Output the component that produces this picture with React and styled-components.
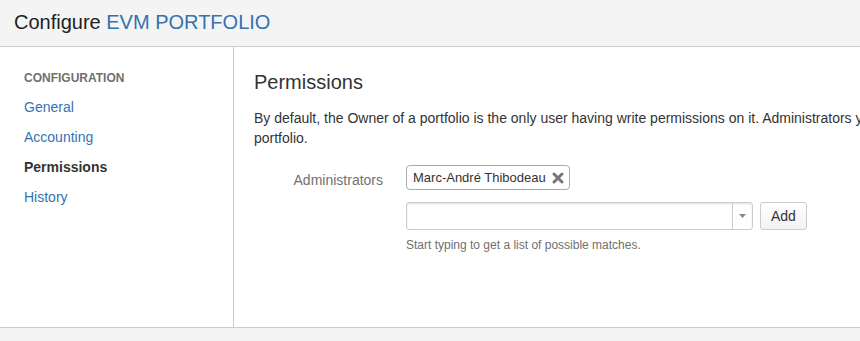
import React from "react";
import styled, { createGlobalStyle } from "styled-components";

const GlobalStyle = createGlobalStyle`
  html, body {
    margin: 0;
    padding: 0;
    background: #fff;
    font-family: "Liberation Sans", Arial, sans-serif;
    color: #333;
  }
`;

const Page = styled.div`
  width: 860px;
  height: 341px;
  display: flex;
  flex-direction: column;
  overflow: hidden;
`;

const Header = styled.div`
  height: 47px;
  background: #f4f4f4;
  border-bottom: 1px solid #cccccc;
  display: flex;
  align-items: center;
  padding-left: 14px;
  box-sizing: border-box;
`;

const Title = styled.h1`
  margin: 0;
  font-size: 20px;
  font-weight: 400;
  color: #222;
  margin-top: -2px;

  span {
    color: #3572b0;
  }
`;

const Body = styled.div`
  display: flex;
  height: 280px;
  border-bottom: 1px solid #cccccc;
`;

const Sidebar = styled.nav`
  width: 234px;
  border-right: 1px solid #cccccc;
  padding: 23px 0 0 24px;
  box-sizing: border-box;
`;

const NavHeading = styled.div`
  font-size: 12px;
  font-weight: 700;
  color: #707070;
  height: 16px;
  line-height: 16px;
  margin-bottom: 6px;
`;

const NavItem = styled.a`
  display: block;
  font-size: 14px;
  height: 30px;
  line-height: 30px;
  text-decoration: none;
  color: ${(p) => (p.$active ? "#333" : "#3572b0")};
  font-weight: ${(p) => (p.$active ? 700 : 400)};
`;

const Main = styled.main`
  flex: 1;
  padding: 23px 0 0 20px;
  overflow: hidden;
`;

const SectionTitle = styled.h2`
  margin: 0;
  font-size: 20px;
  font-weight: 400;
  color: #333;
  line-height: 24px;
`;

const Intro = styled.p`
  margin: 14px 0 0;
  font-size: 14px;
  line-height: 20px;
  color: #333;
  white-space: nowrap;
`;

const FieldRow = styled.div`
  display: flex;
  margin-top: 17px;
`;

const FieldLabel = styled.label`
  width: 129px;
  text-align: right;
  font-size: 14px;
  color: #707070;
  padding-top: 5px;
  line-height: 20px;
  flex-shrink: 0;
`;

const FieldControls = styled.div`
  margin-left: 23px;
  display: flex;
  flex-direction: column;
  align-items: flex-start;
`;

const Tag = styled.div`
  display: inline-flex;
  align-items: center;
  height: 25px;
  box-sizing: border-box;
  border: 1px solid #aaa;
  border-radius: 4px;
  padding: 0 5px 0 6px;
  font-size: 13px;
  color: #333;
  gap: 6px;
  background: #fff;
`;

const InputRow = styled.div`
  display: flex;
  gap: 7px;
  margin-top: 12px;
`;

const Combo = styled.div`
  width: 347px;
  height: 28px;
  box-sizing: border-box;
  border: 1px solid #cccccc;
  border-radius: 3px;
  box-shadow: inset 0 1px 2px rgba(0, 0, 0, 0.12);
  display: flex;
  background: #fff;
`;

const ComboInput = styled.input`
  flex: 1;
  border: none;
  outline: none;
  background: transparent;
  font: inherit;
  min-width: 0;
`;

const ComboToggle = styled.div`
  width: 19px;
  border-left: 1px solid #cccccc;
  display: flex;
  align-items: center;
  justify-content: center;
`;

const Button = styled.button`
  height: 28px;
  padding: 0 10px;
  border: 1px solid #cccccc;
  border-radius: 3px;
  background: linear-gradient(#ffffff, #f2f2f2);
  font-family: "Liberation Sans", Arial, sans-serif;
  font-size: 14px;
  color: #333;
`;

const Help = styled.div`
  margin-top: 8px;
  font-size: 12px;
  color: #707070;
`;

const Footer = styled.div`
  flex: 1;
  background: #f4f4f4;
`;

function RemoveIcon() {
  return (
    <svg width="12" height="12" viewBox="0 0 12 12">
      <path d="M2 2 L10 10 M10 2 L2 10" stroke="#777" strokeWidth="3" strokeLinecap="round" />
    </svg>
  );
}

function App() {
  return (
    <Page>
      <GlobalStyle />
      <Header>
        <Title>
          Configure <span>EVM PORTFOLIO</span>
        </Title>
      </Header>
      <Body>
        <Sidebar>
          <NavHeading>CONFIGURATION</NavHeading>
          <NavItem href="#">General</NavItem>
          <NavItem href="#">Accounting</NavItem>
          <NavItem $active>Permissions</NavItem>
          <NavItem href="#">History</NavItem>
        </Sidebar>
        <Main>
          <SectionTitle>Permissions</SectionTitle>
          <Intro>
            By default, the Owner of a portfolio is the only user having write permissions on it. Administrators you
            add here also get write permissions on this
            <br />
            portfolio.
          </Intro>
          <FieldRow>
            <FieldLabel>Administrators</FieldLabel>
            <FieldControls>
              <Tag>
                Marc-André Thibodeau
                <RemoveIcon />
              </Tag>
              <InputRow>
                <Combo>
                  <ComboInput />
                  <ComboToggle>
                    <svg width="7" height="4" viewBox="0 0 7 4">
                      <path d="M0 0 L7 0 L3.5 4 Z" fill="#888" />
                    </svg>
                  </ComboToggle>
                </Combo>
                <Button>Add</Button>
              </InputRow>
              <Help>Start typing to get a list of possible matches.</Help>
            </FieldControls>
          </FieldRow>
        </Main>
      </Body>
      <Footer />
    </Page>
  );
}

export default App;
